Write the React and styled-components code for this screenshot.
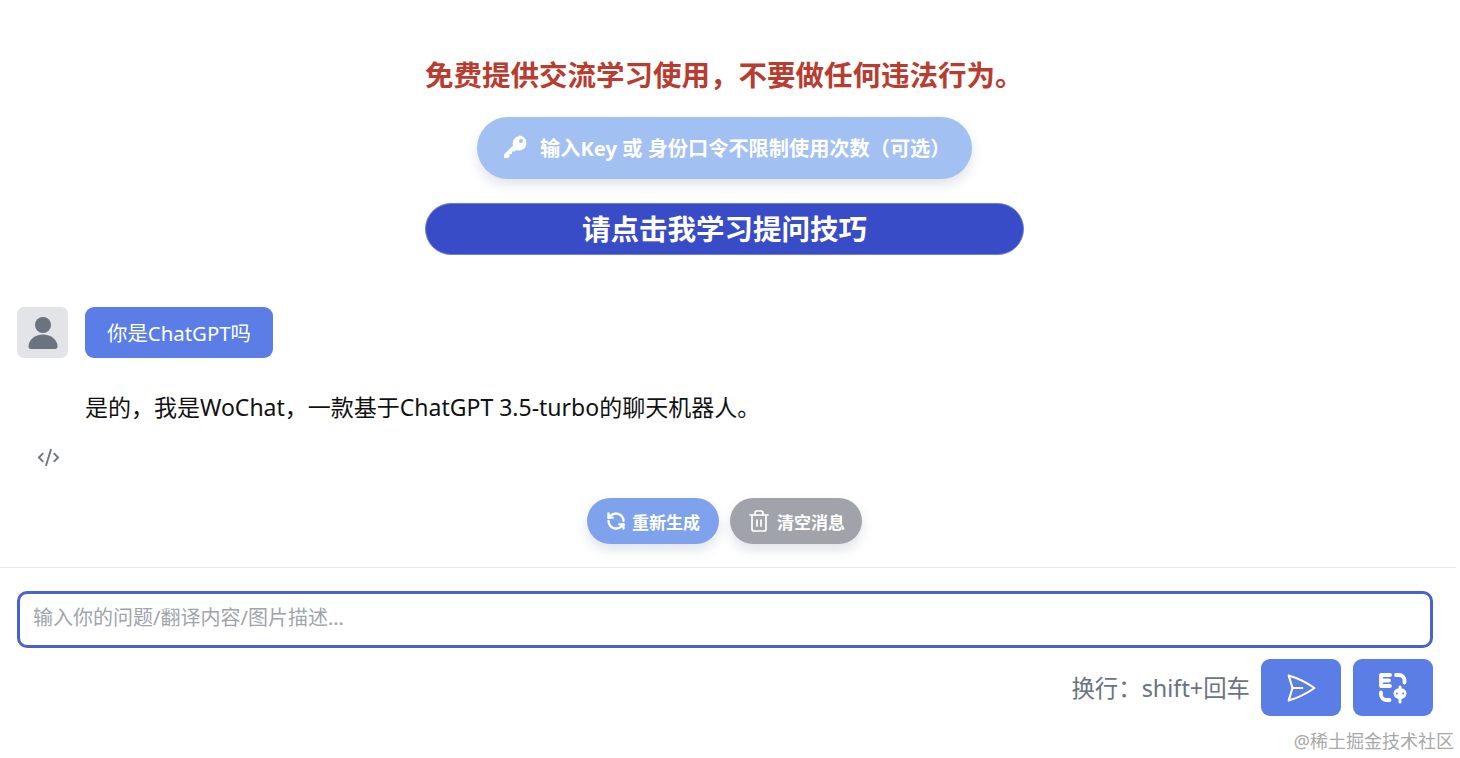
import styled, { createGlobalStyle } from "styled-components";
import { CodeXml, RefreshCcw, Trash2 } from "lucide-react";

const Global = createGlobalStyle`
  html, body {
    margin: 0;
    background: #fff;
    font-family: "Noto Sans", "Noto Sans CJK SC", sans-serif;
  }
`;

function KeyIcon() {
  return (
    <svg width="24" height="24" viewBox="0 0 24 24" fill="#fff">
      <path
        fillRule="evenodd"
        d="M16 0.500a7.500 7.500 0 0 1 0 15c-1 0-2-.2-2.900-.6L11.500 16.500H9v2.500H6.500v2.500l-1.500 1.500H1.500l-.5-.5v-3l9-9a7.500 7.500 0 0 1 6-9.500zM18 4a2 2 0 1 0 0 4 2 2 0 0 0 0-4z"
      />
    </svg>
  );
}

function PersonIcon() {
  return (
    <svg width="30" height="34" viewBox="0 0 30 34" fill="#6b7280">
      <circle cx="15" cy="9" r="8" />
      <path d="M3 33c-1.600 0-2.500-1-2.500-2.500C0.500 24 7 18.500 15 18.500s14.500 5.500 14.500 12c0 1.500-.9 2.500-2.500 2.500z" />
    </svg>
  );
}

function SendIcon() {
  return (
    <svg width="34" height="34" viewBox="0 0 24 24" fill="none" stroke="#fff" strokeWidth="1.500" strokeLinejoin="round">
      <path d="M6 12L3.269 3.126A59.768 59.768 0 0 1 21.485 12 59.77 59.77 0 0 1 3.27 20.876L5.999 12zm0 0h7.500" />
    </svg>
  );
}

function TranslateIcon() {
  return (
    <svg width="30" height="32" viewBox="0 0 30 32" fill="none" stroke="#fff" strokeWidth="3.800" strokeLinecap="round" strokeLinejoin="round">
      <path d="M12 3H3v11h9M3 8.500h8" />
      <path d="M18 3h3a5.500 5.500 0 0 1 5.500 5.500v2" />
      <path d="M3 20.500v2a5.500 5.500 0 0 0 5.500 5.500h3" />
      <ellipse cx="22" cy="21.500" rx="6.500" ry="5.500" fill="#fff" stroke="none" />
      <path d="M22 15v15" strokeWidth="3" />
      <circle cx="18.800" cy="21.500" r="1" fill="#5a7ee5" stroke="none" />
      <circle cx="25.200" cy="21.500" r="1" fill="#5a7ee5" stroke="none" />
    </svg>
  );
}

export default function App() {
  return (
    <Page>
      <Global />
      <Header>
        <Notice>免费提供交流学习使用，不要做任何违法行为。</Notice>
        <KeyButton>
          <KeyIcon />
          <span>输入Key 或 身份口令不限制使用次数（可选）</span>
        </KeyButton>
        <TipButton>请点击我学习提问技巧</TipButton>
      </Header>

      <Chat>
        <UserRow>
          <Avatar>
            <PersonIcon />
          </Avatar>
          <Bubble>你是ChatGPT吗</Bubble>
        </UserRow>
        <Answer>是的，我是WoChat，一款基于ChatGPT 3.5-turbo的聊天机器人。</Answer>
        <CodeToggle>
          <CodeXml size={23} strokeWidth={2} />
        </CodeToggle>
      </Chat>

      <Actions>
        <ActionButton $bg="#7ea2ec">
          <RefreshCcw size={20} strokeWidth={2.800} />
          重新生成
        </ActionButton>
        <ActionButton $bg="#a0a3aa">
          <Trash2 size={24} strokeWidth={1.700} />
          清空消息
        </ActionButton>
      </Actions>

      <Footer>
        <Input placeholder="输入你的问题/翻译内容/图片描述..." />
        <Toolbar>
          <Hint>换行：shift+回车</Hint>
          <IconButton aria-label="发送">
            <SendIcon />
          </IconButton>
          <IconButton aria-label="翻译">
            <TranslateIcon />
          </IconButton>
        </Toolbar>
      </Footer>

      <Watermark>@稀土掘金技术社区</Watermark>
    </Page>
  );
}

const Page = styled.div`
  position: relative;
  width: 1456px;
  height: 758px;
  overflow: hidden;
  display: flex;
  flex-direction: column;
`;
const Header = styled.header`
  display: flex;
  flex-direction: column;
  align-items: center;
  padding: 58px 24px 0 17px;
`;
const Notice = styled.h1`
  margin: 0;
  width: 599px;
  font-size: 28.500px;
  line-height: 34px;
  font-weight: 700;
  color: #b83c30;
  white-space: nowrap;
`;
const KeyButton = styled.button`
  margin-top: 25px;
  width: 495px;
  height: 62px;
  display: flex;
  align-items: center;
  gap: 13px;
  padding: 0 0 2px 26px;
  border: 0;
  border-radius: 31px;
  background: #a3c0f2;
  color: #fff;
  font: inherit;
  font-size: 20.200px;
  font-weight: 700;
  white-space: nowrap;
  box-shadow: 0 6px 12px rgba(60, 80, 120, 0.16);
`;
const TipButton = styled.button`
  margin-top: 24px;
  width: 599px;
  height: 52px;
  border: 1px solid #6d80dc;
  border-radius: 26px;
  background: #384cc8;
  color: #fff;
  font: inherit;
  font-size: 28.500px;
  font-weight: 700;
  line-height: 1;
`;
const Chat = styled.section`
  padding: 52px 24px 0 17px;
`;
const UserRow = styled.div`
  display: flex;
  gap: 17px;
`;
const Avatar = styled.div`
  width: 51px;
  height: 51px;
  border-radius: 7px;
  background: #e2e4e8;
  display: flex;
  align-items: center;
  justify-content: center;
`;
const Bubble = styled.div`
  width: 188px;
  height: 51px;
  padding-bottom: 2px;
  box-sizing: border-box;
  border-radius: 9px;
  background: #5a7ee5;
  color: #fff;
  font-size: 20.400px;
  display: flex;
  align-items: center;
  justify-content: center;
`;
const Answer = styled.p`
  margin: 33px 0 0 68px;
  font-size: 23px;
  line-height: 32px;
  color: #111;
  white-space: nowrap;
`;
const CodeToggle = styled.div`
  margin: 23px 0 0 20px;
  height: 24px;
  display: flex;
  color: #71767f;
`;
const Actions = styled.div`
  margin-top: 28px;
  padding: 0 24px 23px 17px;
  display: flex;
  justify-content: center;
  gap: 11px;
  border-bottom: 1px solid #e7e8ea;
`;
const ActionButton = styled.button`
  width: 132px;
  height: 46px;
  display: flex;
  align-items: center;
  justify-content: center;
  gap: 6px;
  padding: 0;
  border: 0;
  border-radius: 23px;
  background: ${(p) => p.$bg};
  color: #fff;
  font: inherit;
  font-size: 17px;
  font-weight: 700;
  box-shadow: 0 6px 12px rgba(60, 80, 120, 0.16);
`;
const Footer = styled.footer`
  padding: 23px 23px 0 17px;
  display: flex;
  flex-direction: column;
  gap: 12px;
`;
const Input = styled.input`
  box-sizing: border-box;
  width: 100%;
  height: 57px;
  padding: 0 13px 5px;
  border: 3px solid #4a62cc;
  border-radius: 10px;
  outline: none;
  font: inherit;
  font-size: 20px;
  &::placeholder {
    color: #a0a4ac;
    opacity: 1;
  }
`;
const Toolbar = styled.div`
  display: flex;
  align-items: center;
  justify-content: flex-end;
  gap: 12px;
  margin-top: -1px;
`;
const Hint = styled.span`
  margin-right: -1px;
  padding-bottom: 2px;
  font-size: 23.400px;
  color: #6b7280;
  white-space: nowrap;
`;
const IconButton = styled.button`
  width: 80px;
  height: 57px;
  display: flex;
  align-items: center;
  justify-content: center;
  padding: 0;
  border: 0;
  border-radius: 9px;
  background: #5a7ee5;
`;
const Watermark = styled.div`
  position: absolute;
  right: 2px;
  bottom: 5px;
  font-size: 18px;
  line-height: 24px;
  color: #a8a8a8;
  white-space: nowrap;
`;
